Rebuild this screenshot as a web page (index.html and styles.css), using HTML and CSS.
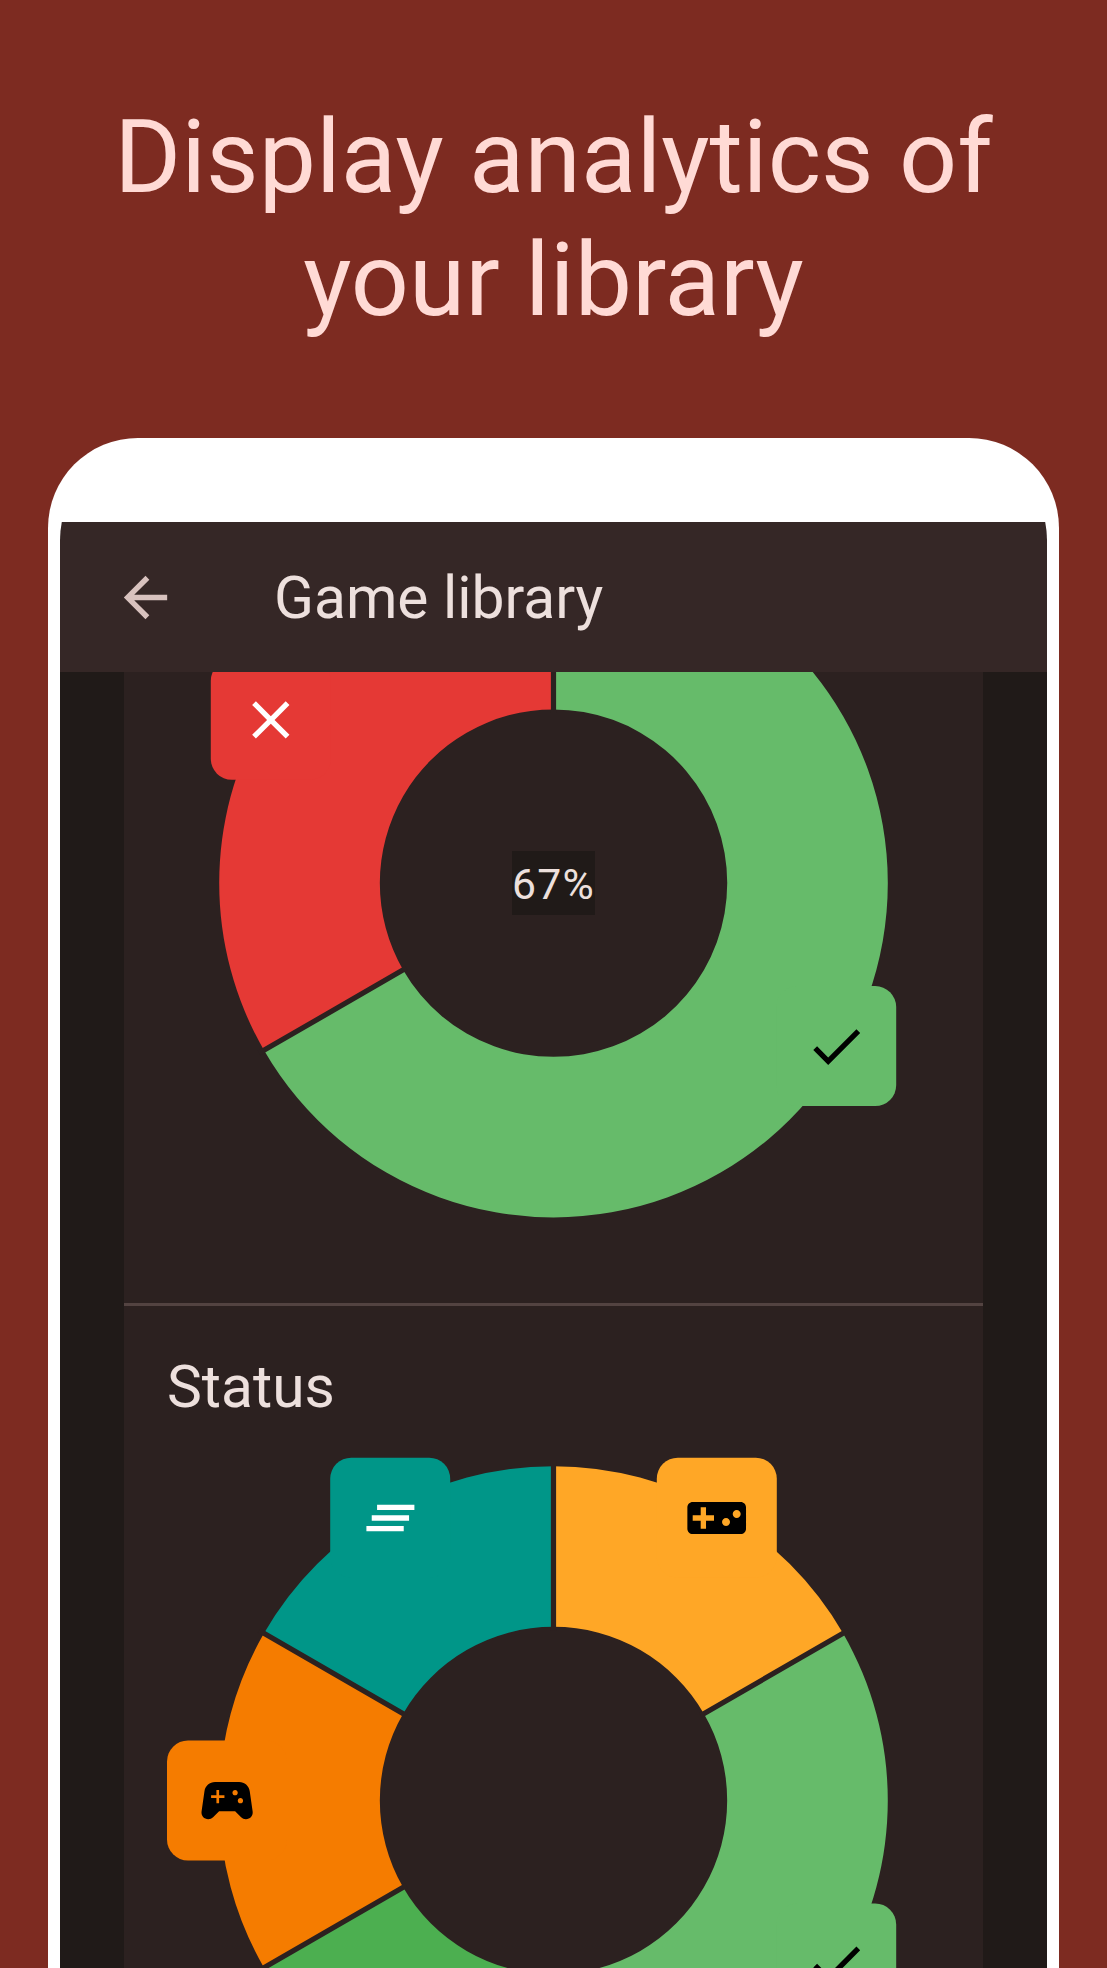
FILE: index.html
```html
<!DOCTYPE html>
<html lang="en">
<head>
<meta charset="utf-8">
<title>Game library</title>
<link rel="stylesheet" href="styles.css">
</head>
<body>
<main class="promo">
  <h1 class="headline">Display analytics of<br>your library</h1>
  <div class="phone">
    <div class="display">
      <header class="app-bar">
        <svg class="back" viewBox="0 0 24 24" aria-label="Back"><path d="M20 11H7.83l5.59-5.59L12 4l-8 8 8 8 1.41-1.41L7.83 13H20z"/></svg>
        <span class="title">Game library</span>
      </header>
      <div class="content">
        <section class="card finished">
          <svg class="chart" viewBox="-429.5 -211.1 859 631">
            <defs>
              <symbol id="check" viewBox="0 0 24 24"><path d="M9 16.17L4.83 12l-1.42 1.41L9 19 21 7l-1.41-1.41z"/></symbol>
            </defs>
            <path class="green" d="M0-334.3A334.3 334.3 0 1 1-289.5 167.15L-150.4 86.85A173.7 173.7 0 1 0 0-173.7z"/>
            <path class="red" d="M-289.5 167.15A334.3 334.3 0 0 1 0-334.3V-173.7A173.7 173.7 0 0 0-150.4 86.85z"/>
            <path class="gap" d="M0-170V-340M-147.2 85L-294.4 170"/>
            <rect class="red" x="-342.7" y="-223.3" width="120" height="120" rx="21"/>
            <rect class="green" x="222.7" y="103" width="120" height="120" rx="21"/>
            <svg class="on-dark" x="-314.7" y="-195.2" width="64" height="64" viewBox="0 0 24 24"><path d="M19 6.41L17.59 5 12 10.59 6.41 5 5 6.41 10.59 12 5 17.59 6.41 19 12 13.41 17.59 19 19 17.59 13.41 12z"/></svg>
            <use href="#check" x="250.7" y="131.2" width="64" height="64"/>
          </svg>
          <span class="percent">67%</span>
        </section>
        <section class="card status">
          <h2 class="card-title">Status</h2>
          <svg class="chart" viewBox="-429.5 -360.5 859 528">
            <path class="amber" d="M0-334.3A334.3 334.3 0 0 1 289.5-167.15L150.4-86.85A173.7 173.7 0 0 0 0-173.7z"/>
            <path class="green" d="M289.5-167.15A334.3 334.3 0 0 1 0 334.3V173.7A173.7 173.7 0 0 0 150.4-86.85z"/>
            <path class="deep-green" d="M0 334.3A334.3 334.3 0 0 1-289.5 167.15L-150.4 86.85A173.7 173.7 0 0 0 0 173.7z"/>
            <path class="orange" d="M-289.5 167.15A334.3 334.3 0 0 1-289.5-167.15L-150.4-86.85A173.7 173.7 0 0 0-150.4 86.85z"/>
            <path class="teal" d="M-289.5-167.15A334.3 334.3 0 0 1 0-334.3V-173.7A173.7 173.7 0 0 0-150.4-86.85z"/>
            <path class="gap" d="M0-170V-340M147.2-85L294.4-170M0 170V340M-147.2 85L-294.4 170M-147.2-85L-294.4-170"/>
            <rect class="amber" x="103.3" y="-342.8" width="120" height="120" rx="21"/>
            <rect class="green" x="222.7" y="103" width="120" height="120" rx="21"/>
            <rect class="orange" x="-386.5" y="-60" width="120" height="120" rx="21"/>
            <rect class="teal" x="-223.3" y="-342.8" width="120" height="120" rx="21"/>
            <svg x="131.2" y="-314.5" width="64" height="64" viewBox="0 0 24 24"><path d="M21 6H3c-1.1 0-2 .9-2 2v8c0 1.1.9 2 2 2h18c1.1 0 2-.9 2-2V8c0-1.1-.9-2-2-2zm-10 7H8v3H6v-3H3v-2h3V8h2v3h3v2zm4.500 2c-.83 0-1.500-.67-1.500-1.500s.67-1.500 1.500-1.500 1.500.67 1.500 1.500-.67 1.500-1.500 1.500zm4-3c-.83 0-1.500-.67-1.500-1.500S18.670 9 19.500 9s1.500.67 1.500 1.500-.67 1.500-1.500 1.500z"/></svg>
            <use href="#check" x="250.7" y="131.2" width="64" height="64"/>
            <svg x="-358.4" y="-31.8" width="64" height="64" viewBox="0 0 24 24"><path d="M21.580 16.090l-1.090-7.660C20.210 6.460 18.520 5 16.530 5H7.470C5.480 5 3.790 6.460 3.510 8.430l-1.090 7.660C2.200 17.630 3.390 19 4.940 19c.68 0 1.320-.27 1.800-.75L9 16h6l2.250 2.250c.48.48 1.130.75 1.800.75 1.560 0 2.750-1.370 2.530-2.910zM11 11H9v2H8v-2H6v-1h2V8h1v2h2v1zm4-1c-.55 0-1-.45-1-1s.45-1 1-1 1 .45 1 1-.45 1-1 1zm2 3c-.55 0-1-.45-1-1s.45-1 1-1 1 .45 1 1-.45 1-1 1z"/></svg>
            <svg class="on-dark" x="-195.1" y="-314.5" width="64" height="64" viewBox="0 0 24 24"><path d="M5 13h14v-2H5zm-2 4h14v-2H3zM7 7v2h14V7z"/></svg>
          </svg>
        </section>
      </div>
    </div>
  </div>
</main>
</body>
</html>
```
FILE: styles.css
```css
* { box-sizing: border-box; }

body {
  margin: 0;
  background: #7d2b21;
  font-family: Roboto, sans-serif;
}

.promo {
  display: flex;
  flex-direction: column;
  height: 1968px;
  overflow: hidden;
}

.headline {
  flex: none;
  height: 438px;
  margin: 0;
  padding-top: 96px;
  color: #ffdad5;
  font-size: 102px;
  font-weight: 400;
  line-height: 123px;
  text-align: center;
  white-space: nowrap;
}

.phone {
  flex: 1;
  margin: 0 48px;
  padding: 12px 12px 0;
  background: #fff;
  border-radius: 90px 90px 0 0;
}

.display {
  height: 100%;
  padding-top: 72px;
  background: #fff;
  border-radius: 90px 90px 0 0;
  overflow: hidden;
}

.app-bar {
  display: flex;
  align-items: center;
  gap: 96px;
  height: 150px;
  padding-left: 53px;
  background: #352726;
}

.back {
  width: 65px;
  height: 65px;
  fill: #d8c2be;
}

.title {
  padding-top: 2px;
  color: #ede0dd;
  font-size: 58.7px;
  line-height: 75px;
}

.content {
  height: 1296px;
  padding: 0 64px;
  background: #201a18;
  overflow: hidden;
}

.card {
  display: grid;
  background: #2c2120;
}

.finished {
  height: 634px;
  border-bottom: 3px solid #534341;
}

.chart {
  grid-area: 1 / 1;
  display: block;
  width: 859px;
}

.percent {
  grid-area: 1 / 1;
  place-self: start center;
  margin-top: 179px;
  padding-top: 2px;
  background: #201a18;
  color: #ede0dd;
  font-size: 42.67px;
  letter-spacing: 1.33px;
  line-height: 62px;
}

.status {
  grid-template-rows: 134px 528px;
}

.status .chart { grid-area: 2 / 1; }

.card-title {
  margin: 0;
  padding: 44px 0 0 43px;
  color: #ede0dd;
  font-size: 58.7px;
  font-weight: 400;
  line-height: 75px;
}

.green { fill: #66bb6a; }
.deep-green { fill: #4caf50; }
.red { fill: #e53935; }
.amber { fill: #ffa726; }
.orange { fill: #f57c00; }
.teal { fill: #009688; }
.on-dark { fill: #fff; }

.gap {
  fill: none;
  stroke: #2c2120;
  stroke-width: 5.2;
}
```
